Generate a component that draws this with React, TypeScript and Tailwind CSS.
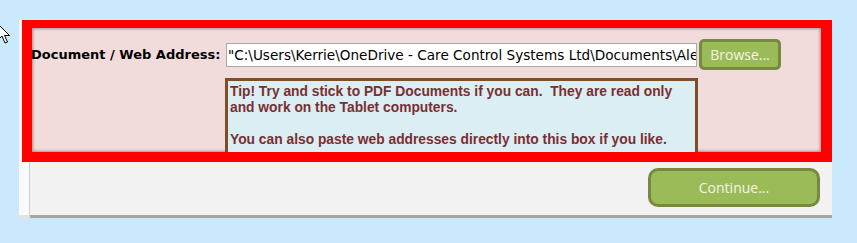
const segoe = "font-['Open_Sans','Noto_Sans',sans-serif]";

const Cursor = () => (
  <svg
    className="absolute left-[-3px] top-[23px]"
    width="14"
    height="21"
    viewBox="0 0 14 21"
  >
    <path
      d="M1 1 L1 17 L5 13 L8 20 L10.5 19 L7.5 12.5 L12.5 12.5 Z"
      fill="#ffffff"
      stroke="#000000"
      strokeWidth="1"
      strokeLinejoin="round"
    />
  </svg>
);

const GreenButton = ({
  label,
  className,
}: {
  label: string;
  className: string;
}) => (
  <div
    className={`flex items-center justify-center bg-[#9bbb59] border-[#76893f] text-[#f4f6e6] ${segoe} ${className}`}
  >
    {label}
  </div>
);

export default function App() {
  return (
    <div className="relative min-h-screen bg-[#cbe9fc] pt-[20px] pl-[19px]">
      <Cursor />
      <div className="w-[813px] bg-[#f2f2f2]">
        {/* highlighted section */}
        <div className="ml-[3px] h-[142px] border-[#ff0000] border-t-[8px] border-l-[10px] border-r-[11px] border-b-[10px]">
          <div className="relative h-full overflow-hidden bg-[#f2dcdb] shadow-[inset_0_0_3px_1px_rgba(0,0,0,0.35)]">
            <div className="flex items-center pt-[11px]">
              <span className="ml-[-1px] w-[195px] shrink-0 whitespace-nowrap text-[13px] font-bold text-black font-['DejaVu_Sans',sans-serif]">
                Document / Web Address:
              </span>
              <div className="w-[471px] h-[24px] shrink-0 overflow-hidden whitespace-nowrap bg-white border border-[#a9a9a9] pl-[1px] text-[13.6px] leading-[22px] text-black font-['DejaVu_Sans',sans-serif]">
                "C:\Users\Kerrie\OneDrive - Care Control Systems Ltd\Documents\Alerts
              </div>
              <GreenButton
                label="Browse..."
                className="ml-[2px] w-[82px] h-[31px] rounded-[5px] border-[3px] text-[14px]"
              />
            </div>
            <div className="ml-[193px] mt-[8px] w-[473px] h-[80px] border-[3px] border-[#7d4e2a] bg-[#daeef3] pt-[3px] px-[2px] text-[13.8px] leading-[16px] font-bold text-[#7a2e32] font-['Liberation_Sans',Arial,sans-serif]">
              <p className="whitespace-pre">
                Tip! Try and stick to PDF Documents if you can.  They are read only
              </p>
              <p>and work on the Tablet computers.</p>
              <p className="mt-[16px] whitespace-nowrap">
                You can also paste web addresses directly into this box if you like.
              </p>
            </div>
          </div>
        </div>
        {/* bottom bar */}
        <div className="flex h-[56px]">
          <div className="w-[11px] shrink-0 bg-[#fafafa] border-r border-[#cfcfcf] border-b-[3px] border-b-[#e6e4d8]" />
          <div className="flex flex-1 justify-end border-b-[3px] border-[#a6a6a6] pt-[6px] pr-[12px]">
            <GreenButton
              label="Continue..."
              className="w-[172px] h-[39px] rounded-[10px] border-[3px] text-[14px]"
            />
          </div>
        </div>
      </div>
    </div>
  );
}
